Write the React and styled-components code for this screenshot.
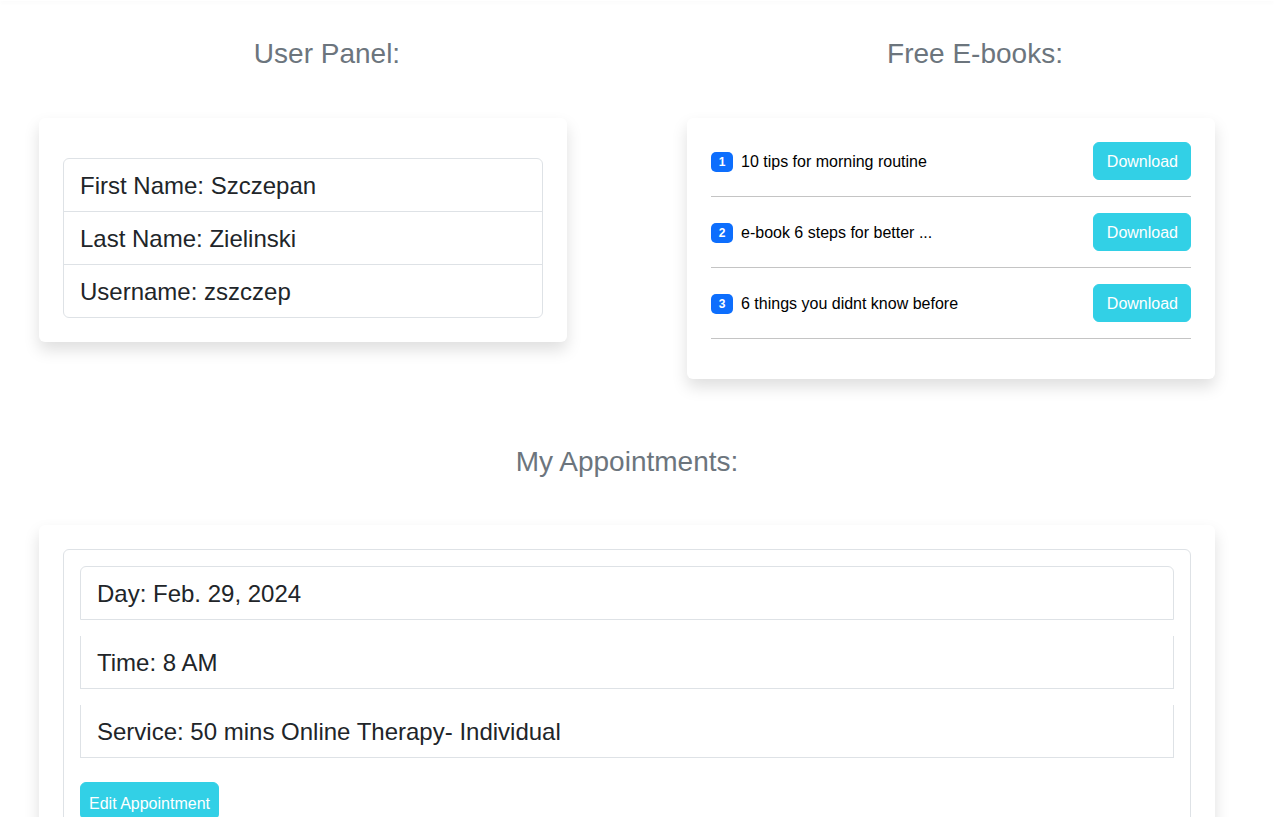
import React from 'react';
import styled, { createGlobalStyle } from 'styled-components';

const GlobalStyle = createGlobalStyle`
  body {
    margin: 0;
    background: #fff;
    font-family: "Liberation Sans", Arial, sans-serif;
    color: #212529;
  }
  * { box-sizing: border-box; }
`;

const TopEdge = styled.div`
  height: 1px;
  box-shadow: 0 1px 4px rgba(0, 0, 0, 0.07);
`;

const Page = styled.div`
  padding-left: 39px;
`;

const TopRow = styled.div`
  display: grid;
  grid-template-columns: 576px 576px;
  column-gap: 72px;
  align-items: start;
`;

const Column = styled.div`
  display: flex;
  flex-direction: column;
`;

const Heading = styled.h3`
  margin: ${p => p.$top}px 0 ${p => p.$bottom}px;
  font-size: 28px;
  font-weight: 400;
  line-height: 34px;
  color: #6c757d;
  text-align: center;
`;

const Card = styled.div`
  width: ${p => p.$width}px;
  background: #fff;
  border-radius: 6px;
  padding: ${p => p.$pad};
  box-shadow: 0 8px 16px rgba(0, 0, 0, 0.13);
`;

const ListGroup = styled.ul`
  list-style: none;
  margin: 0;
  padding: 0;
  border: 1px solid #dee2e6;
  border-radius: 6px;
`;

const ListItem = styled.li`
  font-size: 24px;
  line-height: 36px;
  padding: 9px 16px 7px;
  & + & {
    border-top: 1px solid #dee2e6;
  }
`;

const EbookRow = styled.div`
  display: flex;
  align-items: center;
  justify-content: space-between;
  padding-bottom: 16px;
  margin-bottom: 16px;
  border-bottom: 1px solid #c4c4c4;
`;

const EbookTitle = styled.div`
  display: flex;
  align-items: center;
  gap: 8px;
  font-size: 16px;
  line-height: 20px;
  color: #000;
  padding-top: 1px;
`;

const Badge = styled.span`
  display: inline-flex;
  align-items: center;
  justify-content: center;
  width: 22px;
  height: 20px;
  border-radius: 5px;
  background: #0d6efd;
  color: #fff;
  font-size: 12px;
  font-weight: 700;
`;

const InfoButton = styled.button`
  font-family: inherit;
  font-size: 16px;
  line-height: 24px;
  color: #fff;
  background: #32d0e6;
  border: 1px solid #32d0e6;
  border-radius: 6px;
  padding: ${p => p.$pad};
  cursor: pointer;
`;

const AppointmentsBox = styled.div`
  border: 1px solid #dee2e6;
  border-radius: 6px;
  padding: 16px 16px 40px;
`;

const ApptItem = styled.div`
  font-size: 24px;
  line-height: 36px;
  padding: 9px 16px 7px;
  border: 1px solid #dee2e6;
  border-top-width: ${p => (p.$first ? 1 : 0)}px;
  border-radius: ${p => (p.$first ? '6px 6px 0 0' : '0')};
  margin-bottom: 16px;
`;

const ButtonRow = styled.div`
  padding-top: 8px;
`;

const ebooks = [
  '10 tips for morning routine',
  'e-book 6 steps for better ...',
  '6 things you didnt know before',
];

const user = [
  'First Name: Szczepan',
  'Last Name: Zielinski',
  'Username: zszczep',
];

const appointment = [
  'Day: Feb. 29, 2024',
  'Time: 8 AM',
  'Service: 50 mins Online Therapy- Individual',
];

export default function App() {
  return (
    <>
      <GlobalStyle />
      <TopEdge />
      <Page>
        <TopRow>
          <Column>
            <Heading $top={36} $bottom={47}>User Panel:</Heading>
            <Card $width={528} $pad="40px 24px 24px">
              <ListGroup>
                {user.map(u => (
                  <ListItem key={u}>{u}</ListItem>
                ))}
              </ListGroup>
            </Card>
          </Column>
          <Column>
            <Heading $top={36} $bottom={47}>Free E-books:</Heading>
            <Card $width={528} $pad="24px 24px 24px">
              {ebooks.map((b, i) => (
                <EbookRow key={b}>
                  <EbookTitle>
                    <Badge>{i + 1}</Badge>
                    {b}
                  </EbookTitle>
                  <InfoButton $pad="7px 12px 5px 13px">Download</InfoButton>
                </EbookRow>
              ))}
            </Card>
          </Column>
        </TopRow>
        <Heading $top={66} $bottom={46} style={{ width: 1176 }}>My Appointments:</Heading>
        <Card $width={1176} $pad="24px 24px 0">
          <AppointmentsBox>
            {appointment.map((a, i) => (
              <ApptItem key={a} $first={i === 0}>{a}</ApptItem>
            ))}
            <ButtonRow>
              <InfoButton $pad="9px 8px 3px">Edit Appointment</InfoButton>
            </ButtonRow>
          </AppointmentsBox>
        </Card>
      </Page>
    </>
  );
}
